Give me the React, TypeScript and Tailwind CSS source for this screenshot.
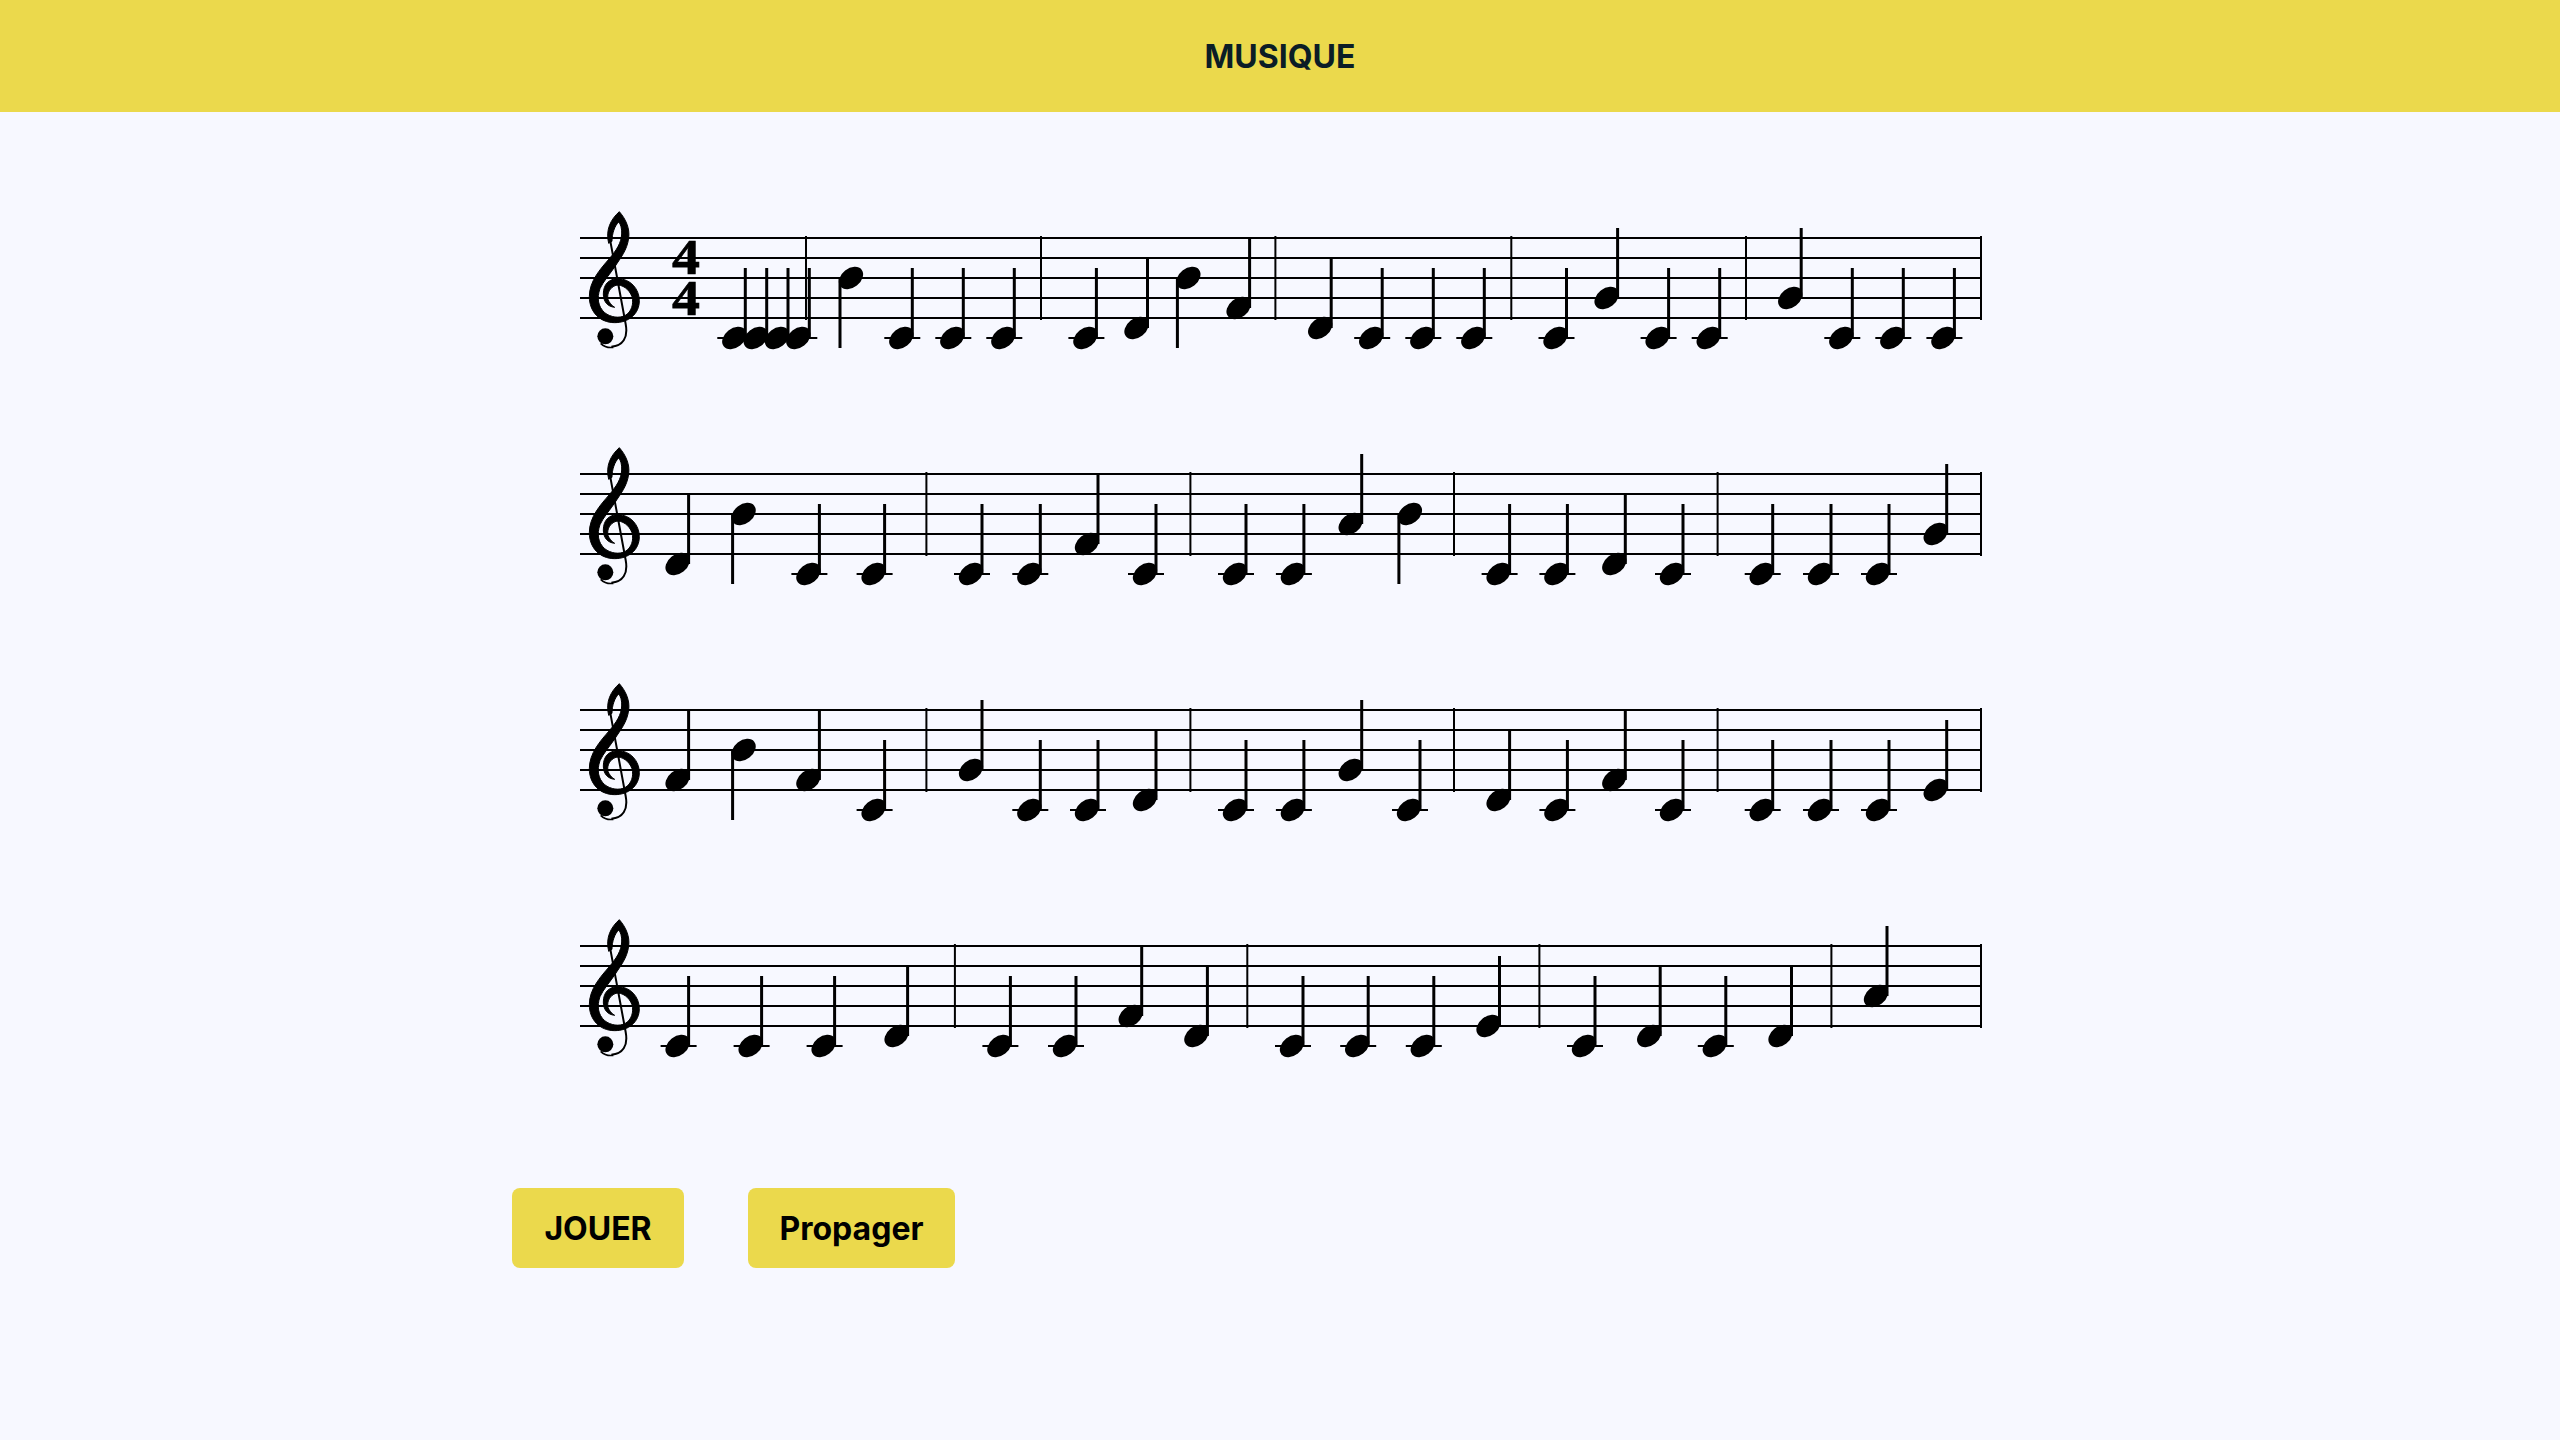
type Pitch = "C" | "D" | "E" | "F" | "G" | "A" | "B";

// decalage des notes par rapport a la derniere ligne de la portee
const offsets: Record<Pitch, number> = { C: 20, D: 10, E: 0, F: -10, G: -20, A: -30, B: -40 };
const TOP = 100;
const BOTTOM = TOP + 80;

const staves: { bars: number[]; meter?: boolean; notes: [number, Pitch][] }[] = [
  {
    meter: true,
    bars: [806, 1041, 1275.4, 1511.3, 1746, 1981],
    notes: [
      [745.3, "C"], [766.7, "C"], [788, "C"], [809.3, "C"],
      [840, "B"], [912.3, "C"], [963.3, "C"], [1014.3, "C"],
      [1096.4, "C"], [1147.5, "D"], [1177.4, "B"], [1249.6, "F"],
      [1331.2, "D"], [1382.2, "C"], [1433.3, "C"], [1484.3, "C"],
      [1566.5, "C"], [1617.6, "G"], [1668.6, "C"], [1719.7, "C"],
      [1801.2, "G"], [1852.3, "C"], [1903.3, "C"], [1954.4, "C"],
    ],
  },
  {
    bars: [926.4, 1190.4, 1454, 1717.6, 1981],
    notes: [
      [688.6, "D"], [732.6, "B"], [819.4, "C"], [884.6, "C"],
      [982, "C"], [1040.3, "C"], [1098, "F"], [1156, "C"],
      [1246, "C"], [1303.9, "C"], [1361.7, "A"], [1398.9, "B"],
      [1509.6, "C"], [1567.4, "C"], [1625.3, "D"], [1683, "C"],
      [1772.7, "C"], [1831, "C"], [1889, "C"], [1946.7, "G"],
    ],
  },
  {
    bars: [926.4, 1190.4, 1454, 1717.6, 1981],
    notes: [
      [688.6, "F"], [732.6, "B"], [819.4, "F"], [884.6, "C"],
      [982, "G"], [1040.3, "C"], [1098, "C"], [1156, "D"],
      [1246, "C"], [1303.9, "C"], [1361.7, "G"], [1420, "C"],
      [1509.6, "D"], [1567.4, "C"], [1625.3, "F"], [1683, "C"],
      [1772.7, "C"], [1831, "C"], [1889, "C"], [1946.7, "E"],
    ],
  },
  {
    bars: [954.9, 1247.3, 1539.4, 1831.4, 1981],
    notes: [
      [688.6, "C"], [761.6, "C"], [834.6, "C"], [907.6, "D"],
      [1010.4, "C"], [1076, "C"], [1141.7, "F"], [1207.4, "D"],
      [1303, "C"], [1368.2, "C"], [1433.8, "C"], [1499.5, "E"],
      [1595, "C"], [1660.2, "D"], [1725.8, "C"], [1791.5, "D"],
      [1887, "A"],
    ],
  },
];

function Clef() {
  return (
    <g transform="translate(570 62) scale(0.3333)">
      <path d="M148 35C168 58 180 86 176 114C172 150 150 176 136 198C120 222 100 244 90 266C80 294 84 320 104 338C122 352 148 356 166 346C184 336 192 312 186 290C178 268 156 252 138 256C120 262 110 280 114 298C118 308 124 316 134 322C112 320 100 304 100 282C100 254 116 236 144 236C180 236 208 266 208 302C208 342 176 368 134 368C88 368 58 334 58 290C58 244 90 208 118 176C140 150 154 128 155 102C156 86 152 72 146 66C134 78 126 100 126 124L116 130C106 90 122 58 148 35Z" fill="#000" stroke="#000" strokeWidth="3" />
      <path d="M120 118L167 372C175 414 158 438 124 440" fill="none" stroke="#000" strokeWidth="6" />
      <circle cx="106" cy="409" r="24" fill="#000" />
      <path d="M92 430C104 442 116 444 130 442" fill="none" stroke="#000" strokeWidth="5" />
    </g>
  );
}

function Note({ x, pitch }: { x: number; pitch: Pitch }) {
  const y = BOTTOM + offsets[pitch];
  const down = pitch === "B";
  const cx = down ? x + 11 : x - 11;
  return (
    <g>
      {pitch === "C" && <rect x={x - 28} y={y - 1} width={36} height={2} fill="#000" />}
      <ellipse cx={cx} cy={y} rx={13.5} ry={9.5} transform={`rotate(-38 ${cx} ${y})`} fill="#000" />
      <rect x={x - 1.5} y={down ? y : y - 70} width={3} height={70} fill="#000" />
    </g>
  );
}

function Staff({ bars, notes, meter }: { bars: number[]; notes: [number, Pitch][]; meter?: boolean }) {
  return (
    <svg viewBox="560 0 1440 236" className="block h-[236px] w-[1440px]">
      {[0, 20, 40, 60, 80].map((d) => (
        <rect key={d} x={580} y={TOP + d - 1} width={1401} height={2} fill="#000" />
      ))}
      {bars.map((x) => (
        <rect key={x} x={x - 1} y={TOP - 2} width={2} height={84} fill="#000" />
      ))}
      <Clef />
      {meter && (
        <text transform="translate(686 0) scale(1.12 1)" className="font-['Liberation_Serif',serif] font-bold" fontSize="50" textAnchor="middle" stroke="#000" strokeWidth="0.6">
          <tspan x={0} y={136}>4</tspan>
          <tspan x={0} y={177}>4</tspan>
        </text>
      )}
      {notes.map(([x, p]) => (
        <Note key={x} x={x} pitch={p} />
      ))}
    </svg>
  );
}

export default function App() {
  return (
    <div className="min-h-screen bg-[#f7f8ff] font-['Inter',sans-serif]">
      <header className="flex h-[112px] items-center justify-center bg-[#ebd94c]">
        <h1 className="pt-[2px] text-[32px] font-bold text-[#0b1d26]">MUSIQUE</h1>
      </header>

      <main className="pt-[26px]">
        <div className="ml-[560px] flex flex-col">
          {staves.map((s, i) => (
            <Staff key={i} bars={s.bars} notes={s.notes} meter={s.meter} />
          ))}
        </div>

        <div className="ml-[512px] mt-[106px] flex gap-16">
          <button className="w-[172px] rounded-lg bg-[#ebd94c] pt-[17px] pb-[15px] text-center text-[32px] leading-[48px] font-bold text-black">JOUER</button>
          <button className="w-[207px] rounded-lg bg-[#ebd94c] pt-[17px] pb-[15px] text-center text-[32px] leading-[48px] font-bold text-black">Propager</button>
        </div>
      </main>
    </div>
  );
}
